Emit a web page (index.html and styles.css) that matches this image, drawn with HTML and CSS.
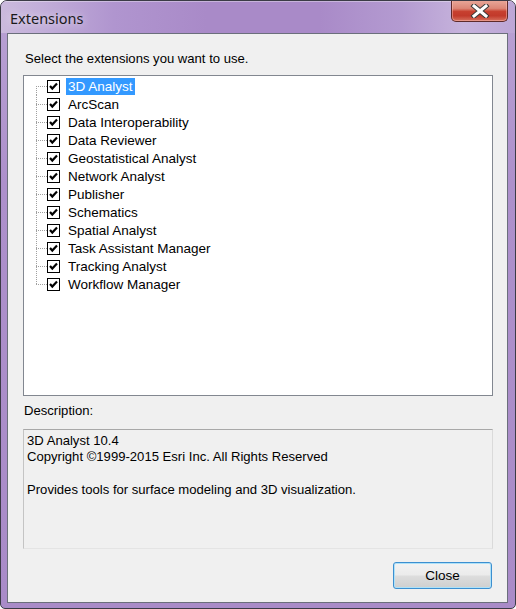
FILE: index.html
```html
<!DOCTYPE html>
<html>
<head>
<meta charset="utf-8">
<link rel="stylesheet" href="styles.css">
</head>
<body>
<div class="window">
  <div class="titlebar">
    <div class="title">Extensions</div>
    <div class="close-x">
      <svg width="20" height="14" viewBox="0 0 20 14">
        <path d="M4 2 L16 12 M16 2 L4 12" stroke="#3a3a3a" stroke-width="5" stroke-linecap="square" fill="none"/>
        <path d="M4 2 L16 12 M16 2 L4 12" stroke="#ffffff" stroke-width="3" stroke-linecap="square" fill="none"/>
      </svg>
    </div>
  </div>
  <div class="client">
    <div class="label">Select the extensions you want to use.</div>
    <div class="tree">
      <div class="row first"><span class="twig"></span><span class="chk"></span><span class="txt sel">3D Analyst</span></div>
      <div class="row"><span class="twig"></span><span class="chk"></span><span class="txt">ArcScan</span></div>
      <div class="row"><span class="twig"></span><span class="chk"></span><span class="txt">Data Interoperability</span></div>
      <div class="row"><span class="twig"></span><span class="chk"></span><span class="txt">Data Reviewer</span></div>
      <div class="row"><span class="twig"></span><span class="chk"></span><span class="txt">Geostatistical Analyst</span></div>
      <div class="row"><span class="twig"></span><span class="chk"></span><span class="txt">Network Analyst</span></div>
      <div class="row"><span class="twig"></span><span class="chk"></span><span class="txt">Publisher</span></div>
      <div class="row"><span class="twig"></span><span class="chk"></span><span class="txt">Schematics</span></div>
      <div class="row"><span class="twig"></span><span class="chk"></span><span class="txt">Spatial Analyst</span></div>
      <div class="row"><span class="twig"></span><span class="chk"></span><span class="txt">Task Assistant Manager</span></div>
      <div class="row"><span class="twig"></span><span class="chk"></span><span class="txt">Tracking Analyst</span></div>
      <div class="row last"><span class="twig"></span><span class="chk"></span><span class="txt">Workflow Manager</span></div>
    </div>
    <div class="label desc-label">Description:</div>
    <div class="desc">
      <div>3D Analyst 10.4</div>
      <div>Copyright ©1999-2015 Esri Inc. All Rights Reserved</div>
      <div>&nbsp;</div>
      <div>Provides tools for surface modeling and 3D visualization.</div>
    </div>
    <div class="buttons">
      <div class="btn">Close</div>
    </div>
  </div>
</div>
</body>
</html>
```

FILE: styles.css
```css
html, body {
  margin: 0;
  padding: 0;
  background: #ffffff;
}
body {
  width: 516px;
  height: 609px;
  font-family: "Liberation Sans", Arial, sans-serif;
  color: #000;
}
.window {
  box-sizing: border-box;
  width: 516px;
  height: 609px;
  border: 1px solid #3b3b46;
  border-radius: 7px 7px 5px 5px;
  background: linear-gradient(to bottom, #b9a2d4 0%, #ad90cb 30%, #a98bc8 100%);
  display: flex;
  flex-direction: column;
  overflow: hidden;
}
.titlebar {
  height: 32px;
  flex: none;
  display: flex;
  justify-content: space-between;
  align-items: flex-start;
  background: linear-gradient(to right, #cbbadd 0%, #c2aed9 8%, #b095cf 22%, #a98ac8 40%, #a98ac8 62%, #b49bd1 78%, #c6b3dc 90%, #bca6d6 100%);
  box-shadow: inset 0 1px 0 rgba(255,255,255,0.35);
}
.title {
  font-family: "Noto Sans", "Open Sans", sans-serif;
  font-size: 14.5px;
  color: #1a1a1a;
  padding: 7px 0 0 9px;
  text-shadow: 0 0 8px rgba(255,255,255,0.8);
}
.close-x {
  width: 57px;
  height: 22px;
  margin-right: 7px;
  margin-top: -1px;
  box-sizing: border-box;
  border: 1px solid #5e2a2a;
  border-top: none;
  border-radius: 0 0 5px 5px;
  background: linear-gradient(to bottom, #e9a99b 0%, #dc8676 40%, #c7402f 55%, #c23a2b 75%, #d6705d 100%);
  box-shadow: inset 0 0 0 1px rgba(255,200,190,0.45);
  display: flex;
  align-items: center;
  justify-content: center;
}
.client {
  flex: 1;
  margin: 0 7px 5px 6px;
  border: 1px solid #6b6f7c;
  background: #f0f0f0;
  display: flex;
  flex-direction: column;
  padding: 0 14px 12px 15px;
  font-size: 13.1px;
}
.label {
  line-height: 16px;
  padding-left: 2px;
  margin-top: 17px;
}
.tree {
  margin-top: 8px;
  height: 321px;
  box-sizing: border-box;
  border: 1px solid #828790;
  background: #ffffff;
  padding: 1px 0 0 12px;
  font-size: 13.5px;
}
.row {
  height: 18px;
  display: flex;
  align-items: center;
}
.twig {
  width: 11px;
  height: 18px;
  flex: none;
  background-image:
    repeating-linear-gradient(to right, #a0a0a0 0 1px, transparent 1px 2px),
    repeating-linear-gradient(to bottom, #a0a0a0 0 1px, transparent 1px 2px);
  background-size: 100% 1px, 1px 100%;
  background-position: left 9px, left top;
  background-repeat: no-repeat;
}
.row.first .twig {
  background-size: 100% 1px, 1px 9px;
  background-position: left 9px, left bottom;
}
.row.last .twig {
  background-size: 100% 1px, 1px 10px;
  background-position: left 9px, left top;
}
.chk {
  width: 11px;
  height: 11px;
  flex: none;
  border: 1px solid #000;
  background: #fff url("data:image/svg+xml;utf8,<svg xmlns='http://www.w3.org/2000/svg' width='11' height='11' viewBox='0 0 11 11'><path d='M2 5 L4.3 7.6 L9 2.6' stroke='black' stroke-width='2.2' fill='none'/></svg>") no-repeat center;
}
.txt {
  margin-left: 6px;
  padding: 0 2px;
  line-height: 17px;
  height: 17px;
  white-space: nowrap;
}
.txt.sel {
  background: #3399ff;
  color: #ffffff;
}
.desc-label {
  margin-top: 7px;
  padding-left: 1px;
}
.desc {
  margin-top: 10px;
  height: 120px;
  box-sizing: border-box;
  border: 1px solid;
  border-color: #a8a8a8 #dadada #e4e4e4 #c4c4c4;
  padding: 3px 0 0 3px;
  line-height: 16.3px;
}
.buttons {
  margin-top: 13px;
  display: flex;
  justify-content: flex-end;
}
.btn {
  width: 99px;
  height: 27px;
  box-sizing: border-box;
  border: 1px solid #3c8fd0;
  border-radius: 3px;
  background: linear-gradient(to bottom, #f3f3f3 0%, #ebebeb 48%, #dddddd 52%, #cfcfcf 100%);
  box-shadow: inset 0 0 0 1px #aee1f8;
  display: flex;
  align-items: center;
  justify-content: center;
  font-size: 13.5px;
  margin-right: 1px;
}
```
